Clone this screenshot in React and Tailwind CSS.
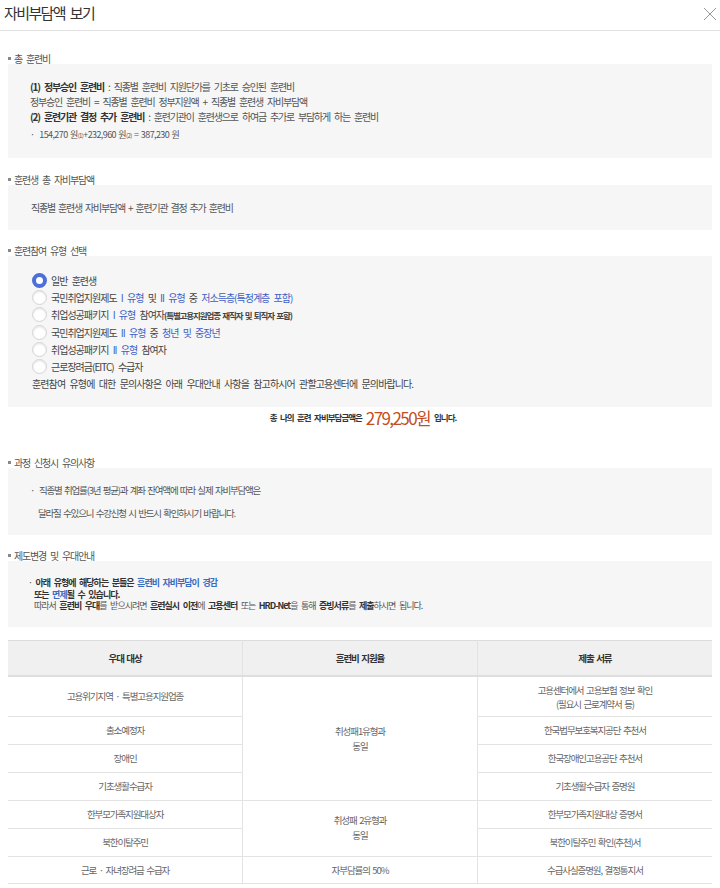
import React from 'react';

const Label = ({ children, className }) => (
  <div className={`flex items-center h-[12px] pl-[8px] text-[#555] ${className}`}>
    <span className="w-[3px] h-[3px] bg-[#888] mr-[3px]" />
    {children}
  </div>
);

const Blue = ({ children }) => <span className="text-[#3e5fc4]">{children}</span>;

function Radio({ checked }) {
  if (checked) {
    return <span className="w-[15px] h-[15px] rounded-full border-[4px] border-[#4c6fd9] bg-white mr-[4px] shrink-0" />;
  }
  return (
    <span className="w-[15px] h-[15px] rounded-full border border-[#d4d4d4] bg-white shadow-[inset_0_1px_2px_rgba(0,0,0,0.12)] mr-[4px] shrink-0" />
  );
}

const options = [
  { checked: true, body: <>일반 훈련생</> },
  {
    body: (
      <>
        국민취업지원제도 <Blue>I 유형</Blue> 및 <Blue>II 유형</Blue> 중 <Blue>저소득층(특정계층 포함)</Blue>
      </>
    ),
  },
  {
    body: (
      <>
        취업성공패키지 <Blue>I 유형</Blue> 참여자
        <span className="text-[8.5px] font-bold text-[#444] tracking-[-1.1px] [word-spacing:1.5px]">(특별고용지원업종 재직자 및 퇴직자 포함)</span>
      </>
    ),
  },
  {
    body: (
      <>
        국민취업지원제도 <Blue>II 유형</Blue> 중 <Blue>청년 및 중장년</Blue>
      </>
    ),
  },
  {
    body: (
      <>
        취업성공패키지 <Blue>II 유형</Blue> 참여자
      </>
    ),
  },
  { body: <>근로장려금(EITC) 수급자</> },
];

const td = 'border-b border-[#e3e3e3] text-center align-middle';

export default function App() {
  return (
    <div className="w-[720px] min-h-[888px] bg-white font-['Noto_Sans_CJK_KR',sans-serif] text-[10px] tracking-[-1.2px] [word-spacing:3px] text-[#555]">
      {/* header */}
      <div className="h-[31px] border-b border-[#e1e1e1] flex items-start justify-between">
        <h1 className="pl-[4px] pt-[4px] text-[15px] leading-[18px] tracking-[-1.6px] [word-spacing:3px] text-[#333]">자비부담액 보기</h1>
        <svg width="14" height="14" viewBox="0 0 14 14" className="mt-[7px] mr-[3px]">
          <path d="M1 1L13 13M13 1L1 13" stroke="#9a9a9a" strokeWidth="1" />
        </svg>
      </div>

      <div className="pl-[8px] pr-[8px]">
        {/* 총 훈련비 */}
        <Label className="mt-[21px] -ml-[8px]">총 훈련비</Label>
        <div className="bg-[#f6f6f6] pt-[15px] pb-[15px] pl-[22px]">
          <p className="leading-[15px]">
            <b className="text-[#333]">(1) 정부승인 훈련비</b> : 직종별 훈련비 지원단가를 기초로 승인된 훈련비
          </p>
          <p className="leading-[15px]">정부승인 훈련비 = 직종별 훈련비 정부지원액 + 직종별 훈련생 자비부담액</p>
          <p className="leading-[15px]">
            <b className="text-[#333]">(2) 훈련기관 결정 추가 훈련비</b> : 훈련기관이 훈련생으로 하여금 추가로 부담하게 하는 훈련비
          </p>
          <p className="mt-[4px] leading-[14px] text-[9px] tracking-[-0.6px] [word-spacing:1px]">
            · &nbsp;154,270 원<span className="text-[6px]">(1)</span>+232,960 원<span className="text-[6px]">(2)</span> = 387,230 원
          </p>
        </div>

        {/* 훈련생 총 자비부담액 */}
        <Label className="mt-[15px] -ml-[8px]">훈련생 총 자비부담액</Label>
        <div className="bg-[#f6f6f6] pt-[15px] pb-[15px] pl-[23px]">
          <p className="leading-[15px] [word-spacing:2px]">직종별 훈련생 자비부담액 + 훈련기관 결정 추가 훈련비</p>
        </div>

        {/* 훈련참여 유형 선택 */}
        <Label className="mt-[14px] -ml-[8px]">훈련참여 유형 선택</Label>
        <div className="bg-[#f6f6f6] pt-[16px] pb-[15px] pl-[24px] tracking-[-1px]">
          {options.map((o, i) => (
            <div key={i} className="h-[17.2px] flex items-center text-[#444]">
              <Radio checked={o.checked} />
              <span>{o.body}</span>
            </div>
          ))}
          <p className="h-[17.2px] flex items-center text-[#444] tracking-[-0.9px]">
            훈련참여 유형에 대한 문의사항은 아래 우대안내 사항을 참고하시어 관할고용센터에 문의바랍니다.
          </p>
        </div>

        <div className="h-[21px] flex items-center justify-center pl-[6px] text-[#333]">
          <span className="text-[8.5px] font-bold tracking-[-1px] [word-spacing:2.5px]">총 나의 훈련 자비부담금액은</span>
          <span className="text-[17px] tracking-[-1.6px] text-[#c24f21] mx-[4px] leading-[20px]">279,250원</span>
          <span className="text-[8.5px] font-bold tracking-[-1px]">입니다.</span>
        </div>

        {/* 과정 신청시 유의사항 */}
        <Label className="mt-[28px] -ml-[8px]">과정 신청시 유의사항</Label>
        <div className="bg-[#f6f6f6] pt-[15px] pb-[14px] pl-[22px] text-[9.5px] tracking-[-1.2px] [word-spacing:1.5px]">
          <p className="leading-[15px]">· &nbsp;직종별 취업률(3년 평균)과 계좌 잔여액에 따라 실제 자비부담액은</p>
          <p className="leading-[15px] mt-[8px] pl-[8px]">달라질 수있으니 수강신청 시 반드시 확인하시기 바랍니다.</p>
        </div>

        {/* 제도변경 및 우대안내 */}
        <Label className="mt-[14px] -ml-[8px]">제도변경 및 우대안내</Label>
        <div className="bg-[#f6f6f6] pt-[16px] pb-[15px] pl-[20px] text-[9px] tracking-[-1px] [word-spacing:2.5px] leading-[11.5px]">
          <p>
            · <b className="text-[#333]">아래 유형에 해당하는 분들은</b>{' '}
            <b className="text-[#3a6cc0]">훈련비 자비부담이 경감</b>
          </p>
          <p className="pl-[6px]">
            <b className="text-[#333]">또는 </b>
            <b className="text-[#3a6cc0]">면제</b>
            <b className="text-[#333]">될 수 있습니다.</b>
          </p>
          <p className="pl-[6px]">
            따라서 <b className="text-[#333]">훈련비 우대</b>를 받으시려면 <b className="text-[#333]">훈련실시 이전</b>에{' '}
            <b className="text-[#333]">고용센터</b> 또는 <b className="text-[#333]">HRD-Net</b>을 통해{' '}
            <b className="text-[#333]">증빙서류</b>를 <b className="text-[#333]">제출</b>하시면 됩니다.
          </p>
        </div>

        {/* 표 */}
        <table className="mt-[13px] w-full table-fixed border-collapse text-[9.5px] tracking-[-1.1px] [word-spacing:1.5px] text-[#666]">
          <thead>
            <tr className="h-[36px] bg-[#f0f0f0] border-t border-[#dcdcdc] border-b-2 border-b-[#dedede] text-[#333]">
              <th className="font-semibold border-r border-[#e3e3e3]">우대 대상</th>
              <th className="font-semibold border-r border-[#e3e3e3]">훈련비 지원율</th>
              <th className="font-semibold">제출 서류</th>
            </tr>
          </thead>
          <tbody>
            <tr className="h-[40px]">
              <td className={`${td} border-r`}>고용위기지역 · 특별고용지원업종</td>
              <td rowSpan={4} className={`${td} border-r leading-[15px]`}>
                취성패1유형과
                <br />
                동일
              </td>
              <td className={`${td} leading-[14px]`}>
                고용센터에서 고용보험 정보 확인
                <br />
                (필요시 근로계약서 등)
              </td>
            </tr>
            <tr className="h-[28px]">
              <td className={`${td} border-r`}>출소예정자</td>
              <td className={td}>한국법무보호복지공단 추천서</td>
            </tr>
            <tr className="h-[28px]">
              <td className={`${td} border-r`}>장애인</td>
              <td className={td}>한국장애인고용공단 추천서</td>
            </tr>
            <tr className="h-[28px]">
              <td className={`${td} border-r`}>기초생활수급자</td>
              <td className={td}>기초생활수급자 증명원</td>
            </tr>
            <tr className="h-[28px]">
              <td className={`${td} border-r`}>한부모가족지원대상자</td>
              <td rowSpan={2} className={`${td} border-r leading-[15px]`}>
                취성패 2유형과
                <br />
                동일
              </td>
              <td className={td}>한부모가족지원대상 증명서</td>
            </tr>
            <tr className="h-[28px]">
              <td className={`${td} border-r`}>북한이탈주민</td>
              <td className={td}>북한이탈주민 확인(추천)서</td>
            </tr>
            <tr className="h-[27px]">
              <td className={`${td} border-r`}>근로 · 자녀장려금 수급자</td>
              <td className={`${td} border-r`}>자부담률의 50%</td>
              <td className={td}>수급사실증명원, 결정통지서</td>
            </tr>
          </tbody>
        </table>
      </div>
    </div>
  );
}
